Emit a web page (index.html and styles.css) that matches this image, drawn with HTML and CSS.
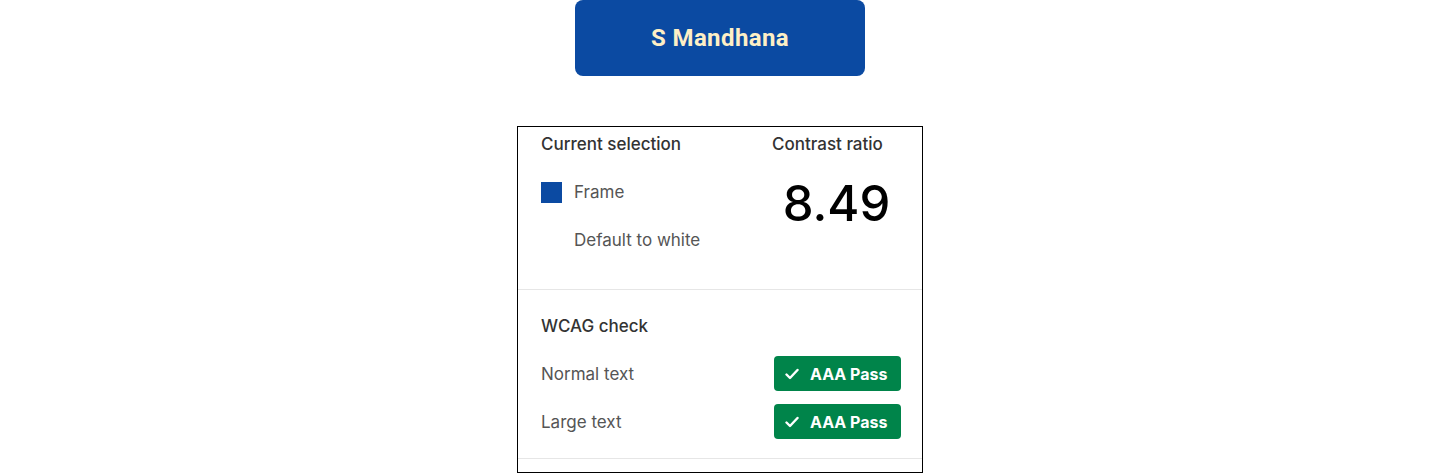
FILE: index.html
```html
<!DOCTYPE html>
<html lang="en">

<head>
    <meta charset="UTF-8">
    <meta name="viewport" content="width=device-width, initial-scale=1.0">
    <title>Contrast check</title>
    <link rel="stylesheet" href="styles.css">
</head>

<body>
    <div class="page">
        <div class="frame">S Mandhana</div>

        <div class="panel">
            <div class="summary">
                <div class="selection">
                    <div class="label">Current selection</div>
                    <div class="layer">
                        <span class="swatch"></span>
                        <span>Frame</span>
                    </div>
                    <div class="layer">
                        <span class="swatch empty"></span>
                        <span>Default to white</span>
                    </div>
                </div>
                <div class="ratio">
                    <div class="label">Contrast ratio</div>
                    <div class="value">8.49</div>
                </div>
            </div>

            <div class="wcag">
                <div class="label">WCAG check</div>
                <div class="check">
                    <span>Normal text</span>
                    <span class="badge">
                        <svg width="14" height="12" viewBox="0 0 14 12"><path d="M1.5 6.5l3.5 3.5 7.5-8" fill="none" stroke="#fff" stroke-width="2.4" stroke-linecap="round" stroke-linejoin="round"/></svg>
                        AAA Pass
                    </span>
                </div>
                <div class="check">
                    <span>Large text</span>
                    <span class="badge">
                        <svg width="14" height="12" viewBox="0 0 14 12"><path d="M1.5 6.5l3.5 3.5 7.5-8" fill="none" stroke="#fff" stroke-width="2.4" stroke-linecap="round" stroke-linejoin="round"/></svg>
                        AAA Pass
                    </span>
                </div>
            </div>
        </div>
    </div>
</body>

</html>
```

FILE: styles.css
```css
* {
    margin: 0;
    padding: 0;
    box-sizing: border-box;
}

body {
    background: #fff;
    font-family: Inter, "Noto Sans", sans-serif;
}

.page {
    display: flex;
    flex-direction: column;
    align-items: center;
}

/* the selected frame */
.frame {
    width: 290px;
    height: 76px;
    background: #0b4aa2;
    border-radius: 8px;
    display: flex;
    align-items: center;
    justify-content: center;
    font-family: Roboto, sans-serif;
    font-weight: 700;
    font-size: 24px;
    letter-spacing: 0.4px;
    color: #fdefc6;
    margin-bottom: 50px;
}

.panel {
    width: 406px;
    border: 1px solid #000;
    padding-bottom: 13px;
}

.label {
    font-size: 17px;
    font-weight: 500;
    line-height: 24px;
    color: #333;
}

.summary {
    display: grid;
    grid-template-columns: 1fr 129px;
    padding: 5px 21px 37px 23px;
    border-bottom: 1px solid #e6e6e6;
}

.selection {
    display: flex;
    flex-direction: column;
    gap: 24px;
}

.layer {
    display: flex;
    align-items: center;
    gap: 12px;
    font-size: 17px;
    line-height: 24px;
    color: #555;
}

.swatch {
    width: 21px;
    height: 21px;
    background: #0b4aa2;
}

.swatch.empty {
    background: none;
}

.value {
    text-align: center;
    font-size: 49px;
    font-weight: 500;
    line-height: 58px;
    margin-top: 19px;
    color: #000;
}

.wcag {
    padding: 24px 21px 19px 23px;
    border-bottom: 1px solid #e6e6e6;
}

.wcag .label {
    margin-bottom: 18px;
}

.check {
    display: flex;
    justify-content: space-between;
    align-items: center;
    height: 35px;
    font-size: 17px;
    color: #555;
}

.check + .check {
    margin-top: 13px;
}

.badge {
    display: flex;
    align-items: center;
    gap: 11px;
    width: 127px;
    height: 35px;
    padding-left: 11px;
    background: #00844a;
    border-radius: 4px;
    color: #fff;
    font-weight: 700;
    font-size: 16px;
}
```
